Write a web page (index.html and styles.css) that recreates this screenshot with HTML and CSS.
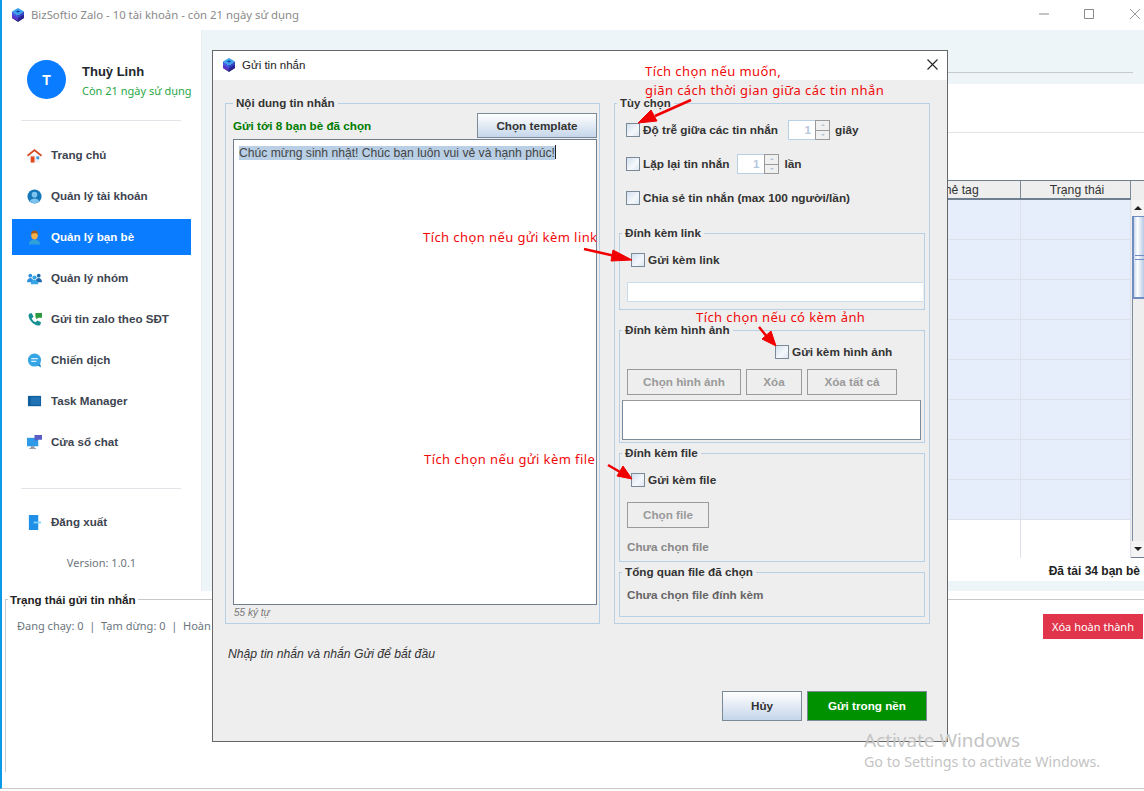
FILE: index.html
```html
<!DOCTYPE html>
<html lang="vi">
<head>
<meta charset="utf-8">
<title>BizSoftio Zalo</title>
<link rel="stylesheet" href="styles.css">
</head>
<body>
<div class="window">
  <header class="titlebar">
    <svg class="logo" viewBox="0 0 14 14"><polygon points="7,7 13,10 7,14 1,10" fill="#1d1a66"/><polygon points="1,6 7,9 7,13 1,10" fill="#5b35c9"/><polygon points="13,6 7,9 7,13 13,10" fill="#2b2596"/><polygon points="7,0 13,3.500 7,7.500 1,3.500" fill="#3aa0ee"/><polygon points="1,3.500 7,7.500 7,10 1,6.500" fill="#3b5fe0"/><polygon points="13,3.500 7,7.500 7,10 13,6.500" fill="#2f49c4"/><path d="M5.500 3.500H8.500M7 2.500V4.500" stroke="#12389a" fill="none"/></svg>
    <span class="titlebar-text">BizSoftio Zalo - 10 tài khoản - còn 21 ngày sử dụng</span>
    <svg class="win-ctl win-min" viewBox="0 0 10 10"><path d="M0 5H10" stroke="#8a8a8a" fill="none"/></svg>
    <svg class="win-ctl win-max" viewBox="0 0 10 10"><path d="M.5.5H9.500V9.500H.5Z" stroke="#8a8a8a" fill="none"/></svg>
    <svg class="win-ctl win-close" viewBox="0 0 10 10"><path d="M0 0L10 10M10 0L0 10" stroke="#9a9a9a" fill="none"/></svg>
  </header>
  <div class="app">
    <aside class="sidebar">
      <div class="profile">
        <div class="avatar">T</div>
        <div class="profile-text">
          <div class="profile-name">Thuỳ Linh</div>
          <div class="profile-sub">Còn 21 ngày sử dụng</div>
        </div>
      </div>
      <div class="divider"></div>
      <nav class="nav">
        <a class="nav-item"><svg viewBox="0 0 16 16"><rect x="2.500" y="7" width="11" height="8.500" fill="#eef2f5"/><path d="M8 1L0 7.500 1 9 8 3.500 15 9 16 7.500Z" fill="#d2451e"/><rect x="4" y="9" width="4" height="6.500" fill="#e2481c"/><rect x="10" y="9" width="3" height="3" fill="#3b9be0"/></svg>Trang chủ</a>
        <a class="nav-item"><svg viewBox="0 0 16 16"><circle cx="8" cy="8" r="7.500" fill="#1577b8"/><circle cx="8" cy="6" r="3" fill="#7cc4ee"/><path d="M3 13c1-4 9-4 10 0a7 7 0 0 1-10 0Z" fill="#7cc4ee"/></svg>Quản lý tài khoản</a>
        <a class="nav-item nav-active"><svg viewBox="0 0 16 16"><path d="M2 15.500c0-4 3-5 6-5s6 1 6 5Z" fill="#2f9fd8"/><ellipse cx="8" cy="5.500" rx="3.500" ry="4.500" fill="#f4b04a"/><path d="M4.500 5C4 1.500 6 .5 8 .5s4 1 3.500 4.500C10.500 3 6 3 4.500 5Z" fill="#9a5a22"/></svg>Quản lý bạn bè</a>
        <a class="nav-item"><svg viewBox="0 0 16 16"><circle cx="3.500" cy="5" r="2" fill="#2d8fe0"/><circle cx="12.500" cy="5" r="2" fill="#1d6bb0"/><path d="M0 12c0-3 2-4.500 3.500-4.500S7 9 7 12Z" fill="#2d8fe0"/><path d="M9 12c0-3 2-4.500 3.500-4.500S16 9 16 12Z" fill="#1d6bb0"/><circle cx="8" cy="7" r="2.300" fill="#36a5e6"/><path d="M4 14c0-3.500 2-4.500 4-4.500s4 1 4 4.500Z" fill="#36a5e6"/></svg>Quản lý nhóm</a>
        <a class="nav-item"><svg viewBox="0 0 16 16"><path d="M2 2L5 1 7 5 5 7c1 2 2 3 4 4l2-2 4 2-1 3c-6 2-14-7-12-12Z" fill="#158f93"/><path d="M9 1H16V6H12L10 8V6H9Z" fill="#2c9a3f"/></svg>Gửi tin zalo theo SĐT</a>
        <a class="nav-item"><svg viewBox="0 0 16 16"><circle cx="8" cy="7.500" r="7" fill="#36a5e6"/><path d="M11 13l4 2.500-1-4Z" fill="#1d84c9"/><path d="M4.500 6H11.500M4.500 9H10" stroke="#d9f0fc" stroke-width="1.300"/></svg>Chiến dịch</a>
        <a class="nav-item"><svg viewBox="0 0 16 16"><rect x="1" y="2" width="14" height="11" fill="#0f5e9e"/><rect x="4" y="3.500" width="10" height="8" fill="#2273b5"/></svg>Task Manager</a>
        <a class="nav-item"><svg viewBox="0 0 16 16"><rect x="0" y="3" width="12" height="9" fill="#2d9be8"/><rect x="4" y="12" width="4" height="2" fill="#8a97a3"/><rect x="2.500" y="14" width="7" height="1" fill="#8a97a3"/><path d="M8 0H16V5H11L9 7V5H8Z" fill="#5a5ec4"/></svg>Cửa sổ chat</a>
      </nav>
      <div class="divider divider-low"></div>
      <a class="nav-item nav-logout"><svg viewBox="0 0 16 16"><rect x="2" y="0" width="10" height="16" fill="#1f8fe8"/><path d="M7 8H15" stroke="#7fd0ff" stroke-width="2"/></svg>Đăng xuất</a>
      <div class="version">Version: 1.0.1</div>
    </aside>
    <main class="main">
      <div class="main-head"><div class="main-head-line"></div></div>
      <section class="card">
        <div class="card-tabs"></div>
        <div class="table-zone">
          <div class="table">
            <div class="t-row t-head"><div class="t-a"></div><div class="t-b">Thẻ tag</div><div class="t-c">Trạng thái</div></div>
            <div class="t-row t-sel"><div class="t-a"></div><div class="t-b"></div><div class="t-c"></div></div>
            <div class="t-row t-sel"><div class="t-a"></div><div class="t-b"></div><div class="t-c"></div></div>
            <div class="t-row t-sel"><div class="t-a"></div><div class="t-b"></div><div class="t-c"></div></div>
            <div class="t-row t-sel"><div class="t-a"></div><div class="t-b"></div><div class="t-c"></div></div>
            <div class="t-row t-sel"><div class="t-a"></div><div class="t-b"></div><div class="t-c"></div></div>
            <div class="t-row t-sel"><div class="t-a"></div><div class="t-b"></div><div class="t-c"></div></div>
            <div class="t-row t-sel"><div class="t-a"></div><div class="t-b"></div><div class="t-c"></div></div>
            <div class="t-row t-sel"><div class="t-a"></div><div class="t-b"></div><div class="t-c"></div></div>
            <div class="t-row t-last"><div class="t-a"></div><div class="t-b"></div><div class="t-c"></div></div>
          </div>
          <div class="scrollbar">
            <div class="sb-corner"></div>
            <div class="sb-btn"><span class="tri-up"></span></div>
            <div class="sb-thumb"><span class="sb-grip"></span></div>
            <div class="sb-track"></div>
            <div class="sb-btn"><span class="tri-down"></span></div>
          </div>
        </div>
        <div class="card-status">Đã tải 34 bạn bè</div>
      </section>
    </main>
  </div>
  <section class="tasks">
    <fieldset class="tasks-box">
      <legend>Trạng thái gửi tin nhắn</legend>
      <div class="tasks-row">
        <span class="tasks-stats">Đang chạy: 0 &nbsp;|&nbsp; Tạm dừng: 0 &nbsp;|&nbsp; Hoàn thành: 0</span>
        <button class="btn-danger">Xóa hoàn thành</button>
      </div>
    </fieldset>
  </section>
</div>

<div class="dialog">
  <div class="dlg-title">
    <svg class="logo" viewBox="0 0 14 14"><polygon points="7,7 13,10 7,14 1,10" fill="#1d1a66"/><polygon points="1,6 7,9 7,13 1,10" fill="#5b35c9"/><polygon points="13,6 7,9 7,13 13,10" fill="#2b2596"/><polygon points="7,0 13,3.500 7,7.500 1,3.500" fill="#3aa0ee"/><polygon points="1,3.500 7,7.500 7,10 1,6.500" fill="#3b5fe0"/><polygon points="13,3.500 7,7.500 7,10 13,6.500" fill="#2f49c4"/><path d="M5.500 3.500H8.500M7 2.500V4.500" stroke="#12389a" fill="none"/></svg>
    <span>Gửi tin nhắn</span>
    <svg class="dlg-close" viewBox="0 0 11 11"><path d="M.5.5L10.500 10.500M10.500.5L.5 10.500" stroke="#222" stroke-width="1.100" fill="none"/></svg>
  </div>
  <div class="dlg-body">
    <div class="dlg-panels">
      <fieldset class="box box-left">
        <legend>Nội dung tin nhắn</legend>
        <div class="send-head">
          <span class="send-to">Gửi tới 8 bạn bè đã chọn</span>
          <button class="btn btn-template">Chọn template</button>
        </div>
        <div class="editor"><span class="selected">Chúc mừng sinh nhật! Chúc bạn luôn vui vẻ và hạnh phúc!</span><span class="caret"></span></div>
        <div class="char-count">55 ký tự</div>
      </fieldset>
      <fieldset class="box box-right">
        <legend>Tùy chọn</legend>
        <div class="opt opt-first"><span class="check"></span><span class="lbl">Độ trễ giữa các tin nhắn</span>
          <span class="spin spin-delay"><span class="spin-val">1</span><span class="spin-btns"><i class="mini-up"></i><i class="mini-down"></i></span></span><span class="lbl">giây</span></div>
        <div class="opt"><span class="check"></span><span class="lbl">Lặp lại tin nhắn</span>
          <span class="spin spin-repeat"><span class="spin-val">1</span><span class="spin-btns"><i class="mini-up"></i><i class="mini-down"></i></span></span><span class="lbl">lần</span></div>
        <div class="opt"><span class="check"></span><span class="lbl">Chia sẻ tin nhắn (max 100 người/lần)</span></div>

        <fieldset class="sub sub-link">
          <legend>Đính kèm link</legend>
          <div class="opt-sub"><span class="check"></span><span class="lbl">Gửi kèm link</span></div>
          <div class="link-input"></div>
        </fieldset>

        <fieldset class="sub sub-image">
          <legend>Đính kèm hình ảnh</legend>
          <div class="opt-sub opt-image"><span class="check"></span><span class="lbl">Gửi kèm hình ảnh</span></div>
          <div class="btn-row">
            <button class="btn-off w-pick">Chọn hình ảnh</button>
            <button class="btn-off w-del">Xóa</button>
            <button class="btn-off w-delall">Xóa tất cả</button>
          </div>
          <div class="img-list"></div>
        </fieldset>

        <fieldset class="sub sub-file">
          <legend>Đính kèm file</legend>
          <div class="opt-sub"><span class="check"></span><span class="lbl">Gửi kèm file</span></div>
          <div class="btn-row btn-row-file"><button class="btn-off w-file">Chọn file</button></div>
          <div class="muted">Chưa chọn file</div>
        </fieldset>

        <fieldset class="sub sub-summary">
          <legend>Tổng quan file đã chọn</legend>
          <div class="summary">Chưa chọn file đính kèm</div>
        </fieldset>
      </fieldset>
    </div>
    <div class="hint">Nhập tin nhắn và nhắn Gửi để bắt đầu</div>
    <div class="dlg-actions">
      <button class="btn btn-cancel">Hủy</button>
      <button class="btn-send">Gửi trong nền</button>
    </div>
  </div>
</div>

<svg class="arrows" viewBox="0 0 1144 791">
  <g stroke="#f00000" fill="#f00000">
    <path d="M691 100L655 116" stroke-width="2.500"/><polygon points="638,123 651,110 657,121"/>
    <path d="M584 249L615 256" stroke-width="2.500"/><polygon points="632,260 613,250 611,261"/>
    <path d="M759 327L768 338" stroke-width="2.500"/><polygon points="776,346 771,331 762,339"/>
    <path d="M608 465L620 472" stroke-width="2.500"/><polygon points="632,479 623,466 617,476"/>
  </g>
</svg>
<div class="note note-delay">Tích chọn nếu muốn,<br>giãn cách thời gian giữa các tin nhắn</div>
<div class="note note-link">Tích chọn nếu gửi kèm link</div>
<div class="note note-image">Tích chọn nếu có kèm ảnh</div>
<div class="note note-file">Tích chọn nếu gửi kèm file</div>

<div class="watermark">
  <div class="wm-big">Activate Windows</div>
  <div class="wm-small">Go to Settings to activate Windows.</div>
</div>
</body>
</html>
```
FILE: styles.css
```css
* { box-sizing: border-box; }
html, body { margin: 0; height: 100%; }
body {
  width: 1144px; height: 791px; overflow: hidden; position: relative;
  background: #fff; font: bold 11.700px/16px "Liberation Sans", Arial, sans-serif; color: #333;
}
button { font: inherit; margin: 0; padding: 0; cursor: default; }
fieldset { margin: 0; padding: 0; min-width: 0; }

.window {
  width: 1144px; height: 789px; display: flex; flex-direction: column;
  border-left: 2px solid #0a9ae6; border-bottom: 1px solid #c8c8c8;
}
.titlebar { height: 30px; display: flex; align-items: center; padding-left: 9px; flex: none; position: relative; }
.logo { width: 14px; height: 14px; flex: none; }
.titlebar-text { margin-left: 6px; font: 11.350px/16px "Noto Sans", sans-serif; color: #8a8a8a; }
.win-ctl { position: absolute; top: 9px; width: 10px; height: 10px; }
.win-min { left: 1037px; }
.win-max { left: 1082px; }
.win-close { left: 1128px; }

.app { flex: none; height: 561px; display: flex; }
.sidebar { width: 199px; flex: none; padding: 30px 0 0 10px; background: #fff; }
.profile { display: flex; align-items: center; gap: 16px; padding-left: 15px; height: 39px; }
.profile-text { padding-top: 3px; }
.avatar {
  width: 39px; height: 39px; border-radius: 50%; background: #0a7cff; color: #fff;
  display: flex; align-items: center; justify-content: center; font: bold 14px "Liberation Sans", sans-serif;
}
.profile-name { font-size: 13px; line-height: 18px; color: #22262c; }
.profile-sub { font: 11px/16px "Noto Sans", sans-serif; color: #28a745; margin-top: 2px; white-space: nowrap; }
.divider { height: 1px; background: #e0e3e8; margin: 21px 0 0 9px; width: 160px; }
.divider-low { margin-top: 28px; }
.nav { display: flex; flex-direction: column; gap: 5px; margin-top: 16px; }
.nav-item {
  height: 36px; width: 179px; display: flex; align-items: center; padding-left: 15px; gap: 9px;
  color: #3d4450; font-size: 11.600px; white-space: nowrap;
}
.nav-item svg { width: 15px; height: 15px; flex: none; }
.nav-active { background: #0a7cff; color: #fff; }
.nav-logout { margin-top: 15px; }
.version { margin: 15px 0 0 0; width: 179px; text-align: center; font: 11px/16px "Noto Sans", sans-serif; color: #6c757d; }

.main { flex: 1; min-width: 0; background: #eef5f9; padding-left: 10px; border-left: 1px solid #e8eef2; display: flex; flex-direction: column; }
.main-head { height: 54px; flex: none; padding-top: 42px; padding-right: 11px; }
.main-head-line { height: 1px; background: #c6c9cc; }
.card { height: 497px; flex: none; background: #fff; display: flex; flex-direction: column; }
.card-tabs { height: 49px; flex: none; border-bottom: 1px solid #dfe3e8; }
.table-zone { height: 378px; margin-top: 47px; flex: none; display: flex; border-top: 1px solid #6f7f90; border-bottom: 1px solid #6f7f90; }
.table { flex: 1; min-width: 0; display: flex; flex-direction: column; }
.t-row { display: flex; flex: none; height: 40px; }
.t-a { flex: 1; }
.t-b { width: 121px; border-right: 1px solid #dde2ea; }
.t-c { width: 110px; border-right: 1px solid #dde2ea; }
.t-head { height: 19px; background: #eee; border-bottom: 2px solid #6f7f90; font-weight: normal; font-size: 12.200px; color: #333; text-align: center; line-height: 18px; }
.t-head .t-b { border-right: 1px solid #7a8a99; padding-right: 4px; }
.t-head .t-c { border-right: 1px solid #7a8a99; padding-left: 3px; }
.t-sel { background: #e6eefb; border-bottom: 1px solid #dde2ea; }
.t-last { height: 38px; background: #fff; }
.scrollbar { width: 13px; flex: none; background: #eee; display: flex; flex-direction: column; border-left: 1px solid #eee; }
.sb-corner { height: 19px; flex: none; }
.sb-btn { height: 16px; flex: none; background: #f4f4f4; display: flex; align-items: center; justify-content: center; }
.tri-up { border: 4px solid transparent; border-top: 0; border-bottom: 4px solid #222; }
.tri-down { border: 4px solid transparent; border-bottom: 0; border-top: 4px solid #222; }
.sb-thumb {
  height: 83px; flex: none; border: 1px solid #6f8dc0; border-left-width: 2px; border-bottom-width: 2px; border-right: 0;
  background: linear-gradient(90deg, #c9d8ee, #fff 35%, #b8cbe6);
  display: flex; align-items: center; justify-content: flex-end;
}
.sb-grip { width: 9px; height: 5px; border-top: 1px solid #6f8dc0; border-bottom: 1px solid #6f8dc0; }
.sb-track { flex: 1; background: #eee; border-left: 1px solid #7d8ea0; }
.card-status { height: 24px; flex: none; text-align: right; padding-right: 4px; line-height: 26px; color: #222; font-size: 12px; }

.tasks { flex: 1; min-height: 0; padding: 1px 0 0 3px; }
.tasks-box { height: 180px; border: 0; border-top: 1px solid #c8c8c8; border-left: 1px solid #c8c8c8; padding: 0; }
.tasks-box legend { margin-left: 2px; padding: 0 2px; font-size: 11.600px; color: #222; height: 14px; line-height: 16px; }
.tasks-row { display: flex; justify-content: space-between; align-items: flex-start; padding: 0 1px 0 11px; margin-top: 8px; }
.tasks-stats { font: 11px/16px "Noto Sans", sans-serif; color: #6c757d; margin-top: 4px; }
.btn-danger { width: 100px; height: 25px; border: 0; background: #e0354b; color: #fff; font: 11px/25px "Noto Sans", sans-serif; flex: none; }

.dialog {
  position: absolute; left: 212px; top: 50px; width: 736px; height: 692px;
  background: #eee; border: 1px solid #666; display: flex; flex-direction: column;
}
.dlg-title {
  height: 29px; flex: none; background: #fff; display: flex; align-items: center; padding: 0 0 2px 9px; gap: 6px;
  font: 11.500px/16px "Liberation Sans", sans-serif; color: #222; position: relative;
}
.dlg-close { position: absolute; right: 9px; top: 8px; width: 11px; height: 11px; }
.dlg-body { flex: 1; min-height: 0; padding: 16px 17px 0 12px; display: flex; flex-direction: column; }
.dlg-panels { display: flex; gap: 14px; height: 528px; flex: none; }

.box, .sub { border: 1px solid #b8d0e6; }
.box legend, .sub legend { padding: 0 3px; font-size: 11.700px; height: 14px; line-height: 14px; color: #333; }
.box-left { width: 375px; flex: none; height: 528px; padding: 0 3px 0 7px; }
.box-left > legend { margin-left: 0; font-size: 11.600px; }
.box-right { width: 316px; flex: none; height: 528px; padding: 0 4px; }
.box-right > legend { margin-left: -2px; font-size: 11.400px; }
.send-head { display: flex; justify-content: space-between; align-items: flex-end; padding-top: 3px; height: 28px; }
.send-to { color: #007c00; line-height: 16px; padding-bottom: 4px; }
.btn { border: 1px solid #7a8a99; color: #333; background: linear-gradient(#fff, #c5d6ea); }
.btn-template { width: 120px; height: 25px; margin-right: -1px; }
.editor { height: 466px; width: 364px; margin-top: 1px; background: #fff; border: 1px solid #6f7f90; padding: 5px 0 0 5px; font: 12.150px/15px "Liberation Sans", sans-serif; color: #444; }
.selected { background: #b8cfe5; }
.caret { display: inline-block; width: 1px; height: 14px; background: #222; vertical-align: -2px; }
.char-count { font: italic 10px/14px "Liberation Sans", sans-serif; color: #777; margin: 1px 0 0 1px; }

.opt { display: flex; align-items: center; height: 20px; margin-top: 14px; padding-left: 7px; white-space: nowrap; }
.opt-first { margin-top: 10px; }
.check {
  width: 14px; height: 14px; flex: none; border: 1px solid #7a8a99;
  background: linear-gradient(135deg, #d3e0ef, #f5f8fc 60%, #dbe5f0);
}
.lbl { margin-left: 3px; color: #333; font-size: 11.800px; }
.spin { display: flex; height: 20px; border: 1px solid #b8d0e6; background: #fff; flex: none; }
.spin-delay { width: 42px; margin: 0 2px 0 10px; }
.spin-repeat { width: 42px; margin: 0 3px 0 7px; }
.spin-val { flex: 1; text-align: right; padding-right: 4px; color: #b8c8dc; line-height: 18px; }
.spin-btns { width: 15px; flex: none; display: flex; flex-direction: column; margin: -1px -1px -1px 0; border: 1px solid #9a9a9a; }
.mini-up, .mini-down { flex: 1; background: #f0f0f0; position: relative; display: block; }
.mini-up { border-bottom: 1px solid #9a9a9a; }
.mini-up::after, .mini-down::after { content: ""; position: absolute; left: 5px; top: 3px; border: 2px solid transparent; }
.mini-up::after { border-top: 0; border-bottom: 2px solid #b5c3d3; }
.mini-down::after { border-bottom: 0; border-top: 2px solid #b5c3d3; }

.sub { padding: 0; margin-top: 18px; }
.sub > legend { margin-left: 2px; }
.sub-link { height: 84px; }
.sub-image { height: 120px; margin-top: 13px; }
.sub-file { height: 116px; margin-top: 3px; }
.sub-summary { height: 52px; margin-top: 3px; }
.opt-sub { display: flex; align-items: center; height: 20px; margin-top: 10px; padding-left: 11px; white-space: nowrap; }
.opt-image { margin-top: 5px; padding-left: 155px; }
.link-input { height: 20px; margin: 12px 1px 0 7px; background: #fff; border: 1px solid #c7dcec; border-right: 0; }
.btn-row { display: flex; gap: 5px; margin: 7px 0 0 7px; }
.btn-row-file { margin-top: 12px; }
.btn-off { height: 26px; border: 1px solid #9a9a9a; background: #eee; color: #9a9a9a; }
.w-pick { width: 114px; }
.w-del { width: 56px; }
.w-delall { width: 90px; }
.w-file { width: 82px; }
.img-list { height: 40px; width: 299px; margin: 5px 0 0 2px; background: #fff; border: 1px solid #7a8a99; border-top-color: #999; }
.muted { margin: 11px 0 0 7px; color: #888; }
.summary { margin: 8px 0 0 7px; color: #666; }

.hint { font: italic 12.200px/16px "Liberation Sans", sans-serif; color: #333; margin-top: 22px; padding-left: 3px; }
.dlg-actions { display: flex; justify-content: flex-end; gap: 5px; margin-top: 29px; padding-right: 3px; }
.btn-cancel { width: 80px; height: 30px; }
.btn-send { width: 120px; height: 30px; background: #009100; border: 1px solid #7a8a99; color: #fff; }

.arrows { position: absolute; left: 0; top: 0; width: 1144px; height: 791px; pointer-events: none; }
.note { position: absolute; font: 13px/19px "Noto Sans", sans-serif; color: #f00a0a; white-space: nowrap; letter-spacing: .42px; }
.note-delay { left: 645px; top: 62px; }
.note-link { left: 423px; top: 228px; }
.note-image { left: 696px; top: 308px; }
.note-file { left: 424px; top: 450px; }

.watermark { position: absolute; left: 864px; top: 728px; color: #c4c4c4; font-family: "Noto Sans", sans-serif; font-weight: normal; pointer-events: none; }
.wm-big { font-size: 18.900px; line-height: 24px; }
.wm-small { font-size: 14.250px; line-height: 20px; }
```
